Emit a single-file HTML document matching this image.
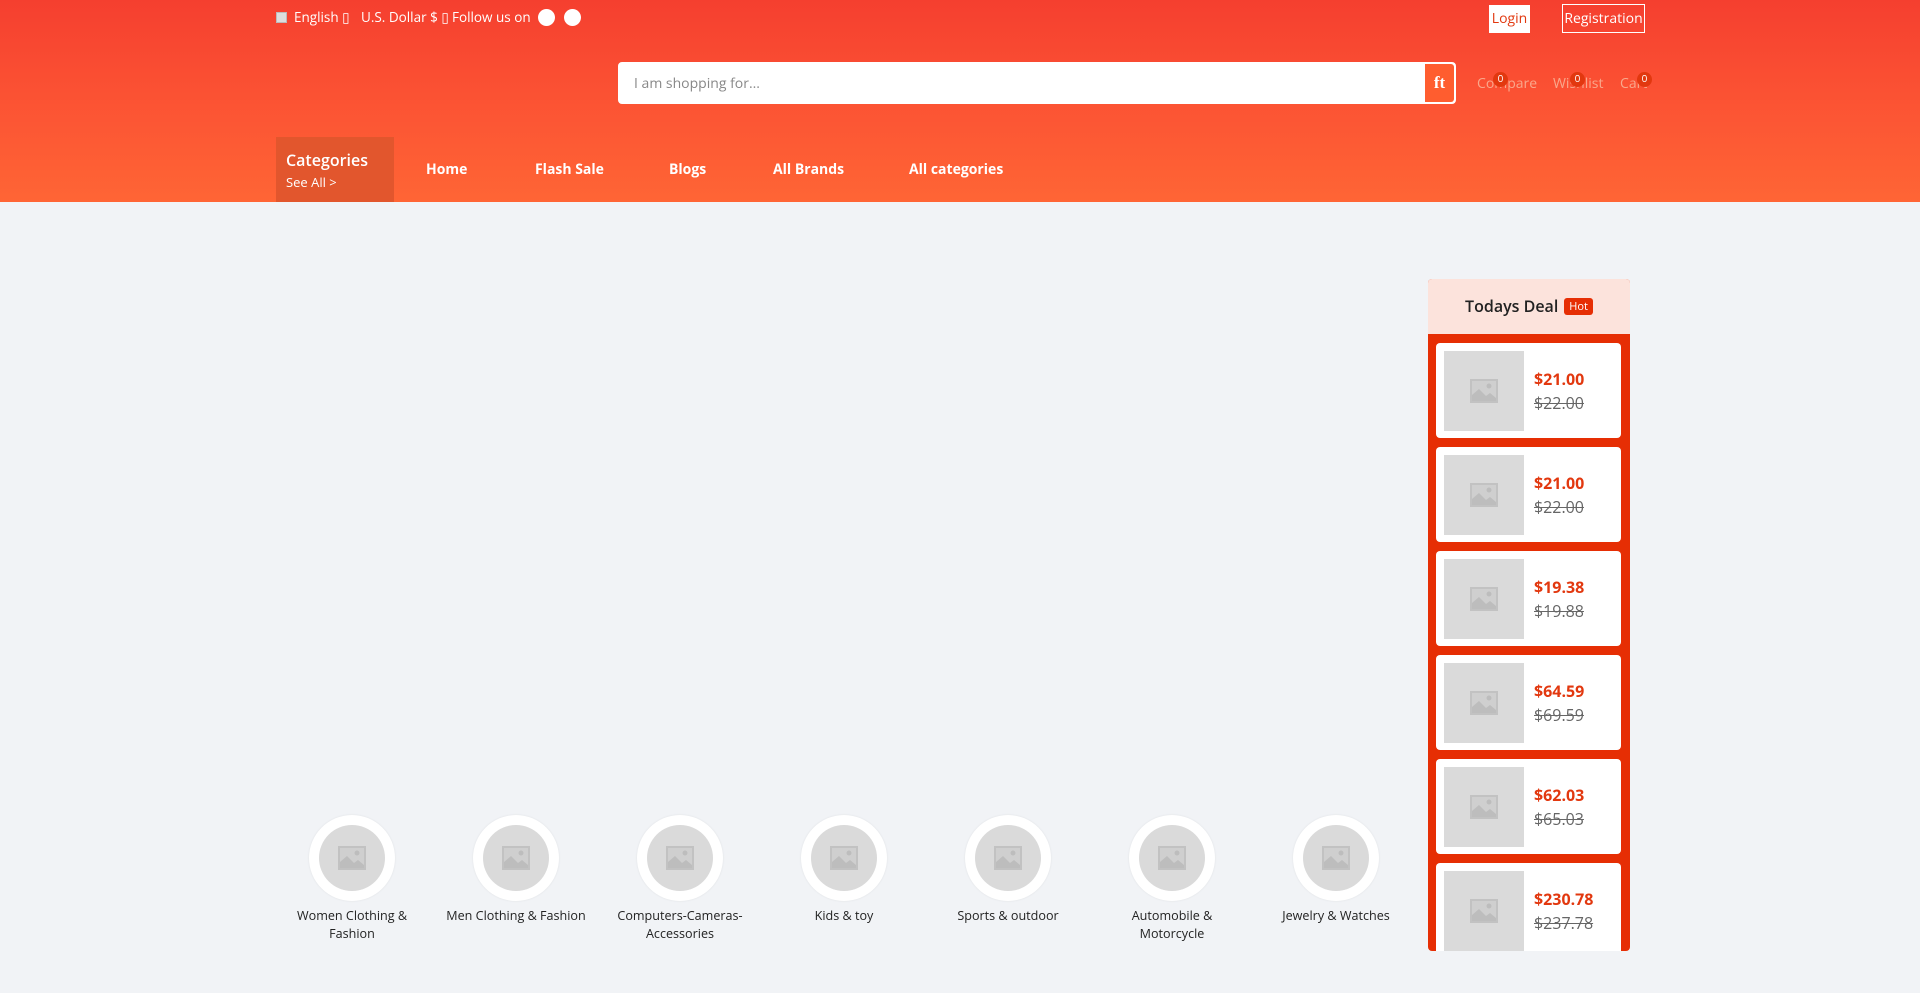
<!DOCTYPE html>
<html><head><meta charset="utf-8"><style>
*{margin:0;padding:0;box-sizing:border-box}
body{width:1920px;height:993px;overflow:hidden;background:#f1f3f6;font-family:"Open Sans","Liberation Sans","DejaVu Sans",sans-serif;position:relative}
.hdr{position:absolute;left:0;top:0;width:1920px;height:202px;background:linear-gradient(180deg,#f53f2f 0%,#fb5133 45%,#ff6535 100%)}
.a{position:absolute;white-space:nowrap}
.top{color:#fff;font-size:13.5px;top:8px}
.circ{width:17px;height:17px;border-radius:50%;background:#fff;top:9px}
.search{left:618px;top:62px;width:838px;height:42px;background:#fff;border-radius:4px;border:2px solid #fff}
.search span{position:absolute;left:14px;top:10px;font-size:14px;color:#888}
.sbtn{position:absolute;right:0;top:0;width:29px;height:38px;background:#ff5d2f;border-radius:0 3px 3px 0;color:#fff;font-weight:bold;font-family:"Liberation Serif",serif;font-size:17px;text-align:center;line-height:38px}
.ic{color:#f9a88c;font-size:14px;top:74px}
.bd{position:absolute;width:15px;height:15px;border-radius:50%;background:#e2380f;color:#fff;font-size:10px;line-height:12px;text-align:center}
.nav{color:#fff;font-size:14px;font-weight:bold;top:160px}
.deal{left:1428px;top:279px;width:202px;height:672px;background:#e62e04;border-radius:4px;overflow:hidden}
.dh{height:55px;background:#fce3dc;text-align:center;font-size:16px;font-weight:600;color:#222;line-height:55px}
.hot{display:inline-block;background:#e62e04;color:#fff;font-size:11px;font-weight:normal;padding:0 5px;line-height:17px;border-radius:3px;margin-left:6px;vertical-align:2px}
.card{position:absolute;left:8px;width:185px;height:95px;background:#fff;border-radius:4px}
.img{position:absolute;left:8px;top:8px;width:80px;height:80px;background:#dadada}
.img svg,.ci svg{position:absolute;left:50%;top:50%;margin:-14px 0 0 -14px}
.p1{position:absolute;left:98px;top:25px;color:#e2380f;font-size:16px;font-weight:bold}
.p2{position:absolute;left:98px;top:49px;color:#666;font-size:16px;text-decoration:line-through}
.cat{position:absolute;top:815px;width:150px;text-align:center;font-size:12.6px;color:#222;line-height:18px}
.co{width:86px;height:86px;border-radius:50%;background:#fff;margin:0 auto 6px;position:relative;box-shadow:0 0 2px rgba(0,0,0,.08)}
.ci{position:absolute;left:10px;top:10px;width:66px;height:66px;border-radius:50%;background:#dadada}
</style></head><body>
<svg width="0" height="0" style="position:absolute"><defs><symbol id="im" viewBox="0 0 28 28"><rect x="1" y="3" width="26" height="22" fill="#cfcfcf" stroke="#c2c2c2" stroke-width="2"/><circle cx="19" cy="9" r="2.5" fill="#bdbdbd"/><path d="M2 24 L2 18 L9 12 L16 19 L20 16 L26 21 L26 24 Z" fill="#bdbdbd"/></symbol></defs></svg>
<div class="hdr"></div>
<div class="a" style="left:276px;top:12px;width:11px;height:11px;background:#ddd;border:1px solid #bbb"></div>
<div class="a top" style="left:294px">English &#x25af;</div>
<div class="a top" style="left:361px">U.S. Dollar $ &#x25af;</div>
<div class="a top" style="left:452px">Follow us on</div>
<div class="a circ" style="left:538px"></div>
<div class="a circ" style="left:564px"></div>
<div class="a" style="left:1489px;top:5px;width:41px;height:28px;background:#fff;color:#e2380f;font-size:14px;text-align:center;line-height:28px">Login</div>
<div class="a" style="left:1562px;top:4px;width:83px;height:29px;border:1px solid #fff;color:#fff;font-size:14px;text-align:center;line-height:27px">Registration</div>
<div class="a search"><span>I am shopping for...</span><div class="sbtn">ft</div></div>
<div class="a ic" style="left:1477px">Compare</div>
<div class="bd" style="left:1493px;top:72px">0</div>
<div class="a ic" style="left:1553px">Wishlist</div>
<div class="bd" style="left:1570px;top:72px">0</div>
<div class="a ic" style="left:1620px">Cart</div>
<div class="bd" style="left:1637px;top:72px">0</div>
<div class="a" style="left:276px;top:137px;width:118px;height:65px;background:#e2562d"></div>
<div class="a" style="left:286px;top:149px;color:#fff;font-size:16px;font-weight:600">Categories</div>
<div class="a" style="left:286px;top:173px;color:#fff;font-size:13px">See All &gt;</div>
<div class="a nav" style="left:426px">Home</div>
<div class="a nav" style="left:535px">Flash Sale</div>
<div class="a nav" style="left:669px">Blogs</div>
<div class="a nav" style="left:773px">All Brands</div>
<div class="a nav" style="left:909px">All categories</div>

<div class="a deal">
<div class="dh">Todays Deal<span class="hot">Hot</span></div>
<div class="card" style="top:64px"><div class="img"><svg width="28" height="28"><use href="#im"/></svg></div><div class="p1">$21.00</div><div class="p2">$22.00</div></div>
<div class="card" style="top:168px"><div class="img"><svg width="28" height="28"><use href="#im"/></svg></div><div class="p1">$21.00</div><div class="p2">$22.00</div></div>
<div class="card" style="top:272px"><div class="img"><svg width="28" height="28"><use href="#im"/></svg></div><div class="p1">$19.38</div><div class="p2">$19.88</div></div>
<div class="card" style="top:376px"><div class="img"><svg width="28" height="28"><use href="#im"/></svg></div><div class="p1">$64.59</div><div class="p2">$69.59</div></div>
<div class="card" style="top:480px"><div class="img"><svg width="28" height="28"><use href="#im"/></svg></div><div class="p1">$62.03</div><div class="p2">$65.03</div></div>
<div class="card" style="top:584px"><div class="img"><svg width="28" height="28"><use href="#im"/></svg></div><div class="p1">$230.78</div><div class="p2">$237.78</div></div>
</div>

<div class="cat" style="left:277px"><div class="co"><div class="ci"><svg width="28" height="28"><use href="#im"/></svg></div></div>Women Clothing &amp;<br>Fashion</div>
<div class="cat" style="left:441px"><div class="co"><div class="ci"><svg width="28" height="28"><use href="#im"/></svg></div></div>Men Clothing &amp; Fashion</div>
<div class="cat" style="left:605px"><div class="co"><div class="ci"><svg width="28" height="28"><use href="#im"/></svg></div></div>Computers-Cameras-<br>Accessories</div>
<div class="cat" style="left:769px"><div class="co"><div class="ci"><svg width="28" height="28"><use href="#im"/></svg></div></div>Kids &amp; toy</div>
<div class="cat" style="left:933px"><div class="co"><div class="ci"><svg width="28" height="28"><use href="#im"/></svg></div></div>Sports &amp; outdoor</div>
<div class="cat" style="left:1097px"><div class="co"><div class="ci"><svg width="28" height="28"><use href="#im"/></svg></div></div>Automobile &amp;<br>Motorcycle</div>
<div class="cat" style="left:1261px"><div class="co"><div class="ci"><svg width="28" height="28"><use href="#im"/></svg></div></div>Jewelry &amp; Watches</div>
</body></html>
